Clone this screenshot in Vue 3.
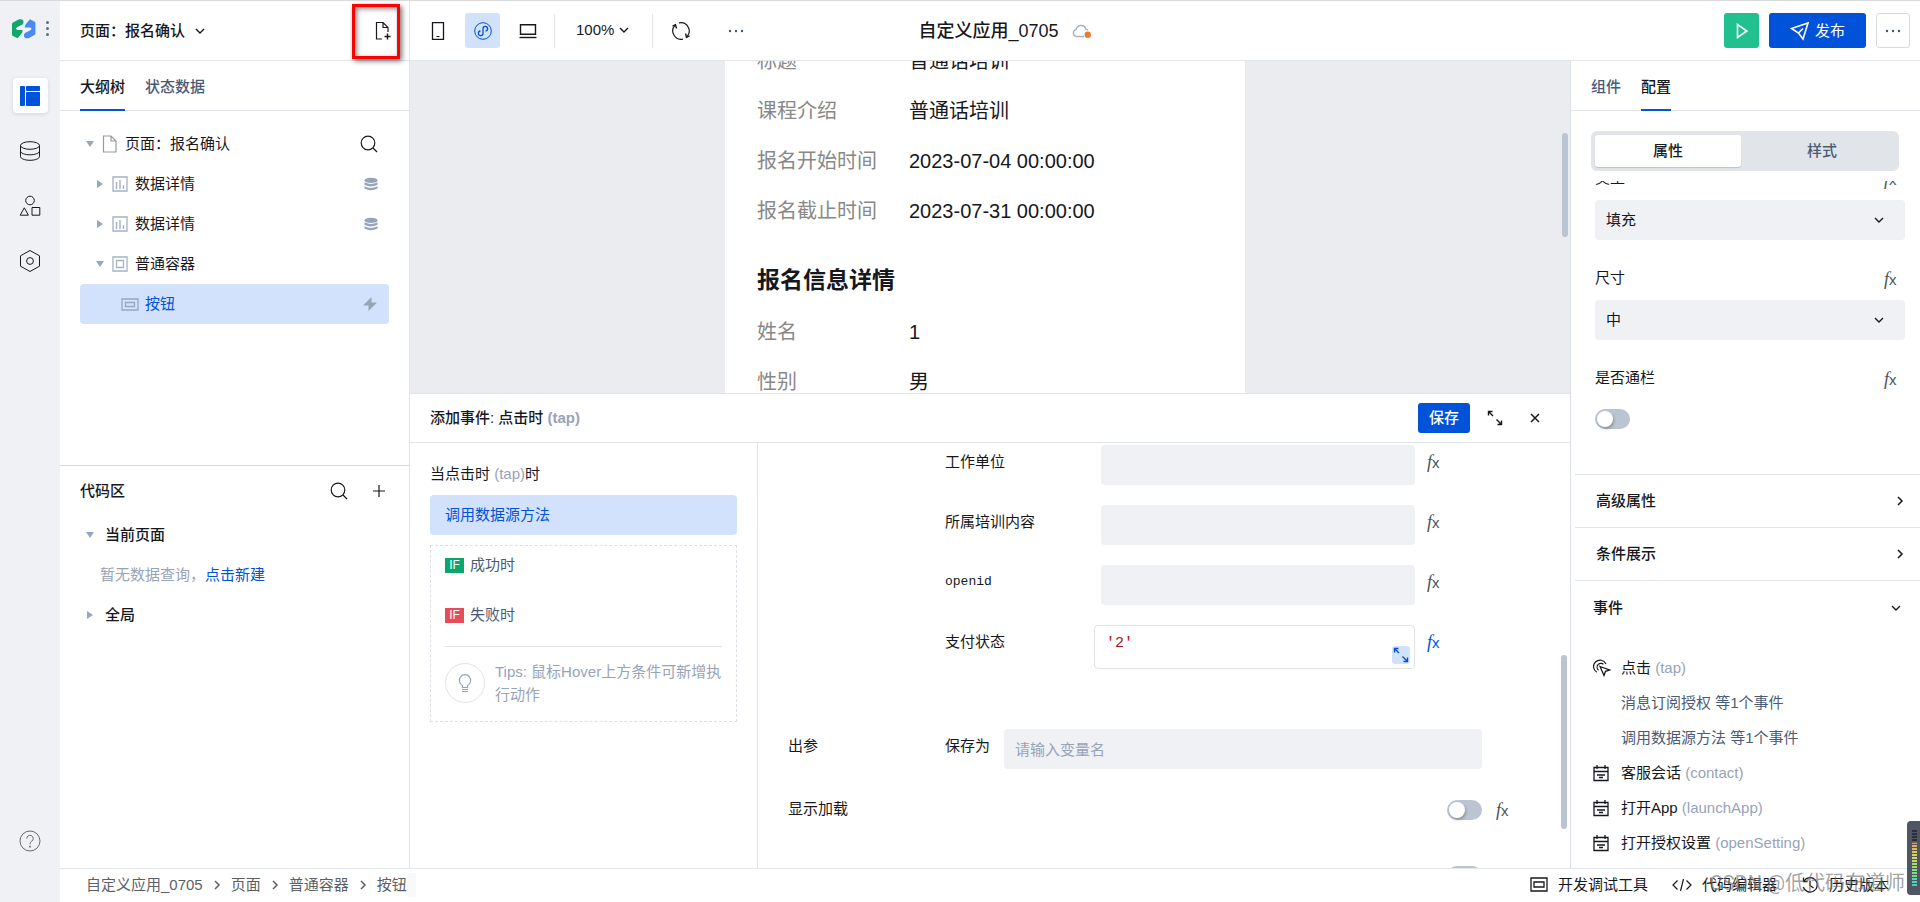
<script setup>
import { h, ref } from 'vue'

const icons = {
  chevronDown: [12, 12, '<path d="M2 4l4 4 4-4" stroke-width="1.4"/>'],
  chevronRight: [8, 12, '<path d="M2 2l4 4-4 4" stroke-width="1.5"/>'],
  filePlus: [18, 20, '<path d="M8 18H2.500V1.500H9L14 6.500V11M9 1.500V6.500H14" stroke-width="1.2"/><path d="M13.500 12.500v6M10.500 15.500h6" stroke-width="1.4"/>'],
  layout: [20, 20, '<path d="M.5.5H4.500V19.500H.5zM6.500.5H19.500V4.500H6.500zM6.500 6.500H19.500V19.500H6.500z" fill="#0052d9" stroke="#0052d9"/>'],
  database: [22, 22, '<ellipse cx="11" cy="5.500" rx="9.500" ry="3.800"/><path d="M1.500 5.500V16.500c0 2.100 4.200 3.800 9.500 3.800s9.500-1.700 9.500-3.800V5.500M1.500 11c0 2.100 4.200 3.800 9.500 3.800s9.500-1.700 9.500-3.800"/>'],
  shapes: [22, 22, '<circle cx="11" cy="5.500" r="4.300"/><path d="M5.300 12.800L9.400 20.200H1.200zM13 12.500H20.800V20.200H13z"/>'],
  hexagon: [22, 24, '<path d="M11 1.500L20.500 6.800V17.200L11 22.500 1.500 17.200V6.800z"/><circle cx="11" cy="12" r="3.400"/>'],
  help: [22, 22, '<circle cx="11" cy="11" r="10"/><path d="M7.800 8.600a3.200 3.200 0 1 1 5.200 2.400c-1.200 1-2 1.500-2 3.200"/><path d="M11 15.800v1.700" stroke-width="1.600"/>'],
  phone: [14, 20, '<path d="M1.500 1.700H12.500V18.300H1.500z" stroke-width="1.3"/><path d="M5.500 15.500h3"/>'],
  miniapp: [18, 18, '<circle cx="9" cy="9" r="8.300"/><path d="M9 6.700V11.300a2.300 2.300 0 1 1-2.600-2.300M9 6.700a2.300 2.300 0 1 1 2.600 2.300" stroke-width="1.300"/>'],
  laptop: [18, 16, '<path d="M1.500 1.700H16.500V11.300H1.500z" stroke-width="1.4"/><path d="M.5 14.500H17.500" stroke-width="1.400"/>'],
  sync: [20, 20, '<path d="M12 18.100A8.300 8.300 0 0 1 4.200 4.200M8 1.900A8.300 8.300 0 0 1 15.800 15.800" stroke-width="1.200"/><path d="M1.500 5.200L4.500 3.800 5.500 7.500M18.500 14.800L15.500 16.200 14.500 12.500" stroke-width="1.400"/>'],
  more: [16, 4, '<g fill="#3f5478" stroke="none"><circle cx="2" cy="2" r="1.200"/><circle cx="8" cy="2" r="1.200"/><circle cx="14" cy="2" r="1.200"/></g>'],
  cloud: [20, 16, '<path d="M12 13.500H4.500a3.500 3.500 0 0 1-.4-6.900 5 5 0 0 1 9.800-.2 4.300 4.300 0 0 1 2 .9" stroke="#a5b1c4" stroke-width="1.400"/><circle cx="15.800" cy="11.800" r="3.200" fill="#ed7b2f" stroke="none"/>'],
  play: [12, 16, '<path d="M1.500 1.500V14.500L10.800 8z" stroke="#fff" stroke-width="1.600"/>'],
  send: [20, 20, '<path d="M1.500 7.500L18 2 13 18 8.500 12zM8.500 12L13 7.500" stroke="#fff" stroke-width="1.600"/>'],
  search: [18, 18, '<circle cx="8" cy="8" r="6.800" stroke-width="1.200"/><path d="M13 13l4 4" stroke-width="1.300"/>'],
  plus: [14, 14, '<path d="M7 1V13M1 7H13" stroke-width="1.200"/>'],
  page: [16, 18, '<path d="M1.500 1H9L14 6V17H1.500zM9 1V6H14" stroke="#999" stroke-width="1.200"/>'],
  chart: [16, 16, '<path d="M1 1H15V15H1z" stroke="#a5b1c8" stroke-width="1.300"/><path d="M4.500 6V13M8 4V13M11.500 9V13" stroke="#a5b1c8" stroke-width="1.400"/>'],
  box: [16, 16, '<path d="M1 1H15V15H1zM4.500 4.500H11.500V11.500H4.500z" stroke="#a5b1c8" stroke-width="1.300"/>'],
  button: [18, 13, '<path d="M1 1H17V12H1zM4.500 4.500H13.500V8.500H4.500z" stroke="#98a6c0" stroke-width="1.300"/>'],
  stack: [14, 14, '<g fill="#97a3b7" stroke="none"><ellipse cx="7" cy="3.400" rx="6.500" ry="2.600"/><path d="M.5 5.200Q7 8.700 13.500 5.200V7.700Q7 11.300 .5 7.700zM.5 9.200Q7 12.700 13.500 9.200V11.500Q7 15 .5 11.500z"/></g>'],
  bolt: [16, 14, '<path d="M9.500 0L1 8.500H6.500V14L15 5.500H9.500z" fill="#97a3b7" stroke="none"/>'],
  open: [8, 6, '<path d="M0 0H8L4 6z" fill="#98a6bd" stroke="none"/>'],
  closed: [6, 8, '<path d="M0 0V8L6 4z" fill="#98a6bd" stroke="none"/>'],
  expand: [16, 16, '<path d="M1.500 5.500V1.500H5.500M1.500 1.500L6 6M14.500 10.500V14.500H10.500M14.500 14.500L9.500 9.500" stroke-width="1.400"/>'],
  close: [12, 12, '<path d="M2 2L10 10M10 2L2 10" stroke-width="1.500"/>'],
  bulb: [14, 20, '<path d="M4.500 14.500V12.500A5.700 5.700 0 1 1 9.500 12.500V14.500zM4 16.500H10M4 18.500H10" stroke="#98a3b5" stroke-width="1.200"/>'],
  tap: [18, 18, '<path d="M7 7.500L16.500 11 12.500 12.300 11 16.500z" stroke-width="1.300"/><path d="M5.500 11.200A3.800 3.800 0 1 1 10.500 5.200M3.800 13.200A6.500 6.500 0 1 1 13 5" stroke-width="1.200"/>'],
  event: [16, 18, '<path d="M1 3.500H15V16.500H1zM1 7.500H15M4 1V5M12 1V5M4 11H12M6 13.500H10" stroke-width="1.300"/>'],
  tool: [18, 15, '<path d="M1 1H17V14H1zM4 5H14V10H4z" stroke-width="1.300"/>'],
  code: [20, 14, '<path d="M5.500 2.500L1 7l4.500 4.500M14.500 2.500L19 7l-4.500 4.500M11.500 1L8.500 13" stroke-width="1.200"/>'],
  history: [18, 18, '<path d="M3 5a7.200 7.200 0 1 1-.8 6M2.500 1.500V5.500H6.500M9 5V9.500L12.500 12" stroke-width="1.300"/>'],
  logo: [24, 20, '<path d="M0 5Q0 4 1 3.500L6.500.5Q8 0 10 .5L11.300 1.500Q12 4 10.500 5.500L5 8.300Q2.500 10.500 6 11H10.500Q11 13 9.500 14.500L5.500 19.300 1 17Q0 16.500 0 15.500z" fill="#10a66c" stroke="none"/><path transform="rotate(180 11.700 9.800)" d="M0 5Q0 4 1 3.500L6.500.5Q8 0 10 .5L11.300 1.500Q12 4 10.500 5.500L5 8.300Q2.500 10.500 6 11H10.500Q11 13 9.500 14.500L5.500 19.300 1 17Q0 16.500 0 15.500z" fill="#4a8af4" stroke="none"/>'],
}

const Icon = ({ name }) => {
  const [w, hgt, body] = icons[name]
  return h('svg', {
    width: w, height: hgt, viewBox: `0 0 ${w} ${hgt}`, fill: 'none',
    stroke: 'currentColor', 'aria-hidden': 'true', innerHTML: body, class: 'icon',
  })
}
Icon.props = ['name']

const tools = [
  { icon: 'layout', label: '页面设计', on: true },
  { icon: 'database', label: '数据源' },
  { icon: 'shapes', label: '组件库' },
  { icon: 'hexagon', label: '应用设置' },
]
const tree = [
  { text: '页面：报名确认', icon: 'page', arrow: 'open', level: 0, end: 'search' },
  { text: '数据详情', icon: 'chart', arrow: 'closed', level: 1, end: 'stack' },
  { text: '数据详情', icon: 'chart', arrow: 'closed', level: 1, end: 'stack' },
  { text: '普通容器', icon: 'box', arrow: 'open', level: 1 },
  { text: '按钮', icon: 'button', level: 2, end: 'bolt', on: true },
]
const course = [
  ['标题', '普通话培训'],
  ['课程介绍', '普通话培训'],
  ['报名开始时间', '2023-07-04 00:00:00'],
  ['报名截止时间', '2023-07-31 00:00:00'],
]
const signup = [['姓名', '1'], ['性别', '男']]
const fields = ['工作单位', '所属培训内容', 'openid']
const selects = [
  { label: '类型', value: '填充' },
  { label: '尺寸', value: '中' },
]
const events = [
  { name: '客服会话', code: '(contact)' },
  { name: '打开App', code: '(launchApp)' },
  { name: '打开授权设置', code: '(openSetting)' },
]
const crumbs = ['自定义应用_0705', '页面', '普通容器', '按钮']
const expression = ref("'2'")
</script>

<template>
  <div class="app">
    <nav class="rail">
      <div class="brand"><Icon name="logo" /><span class="dots"><i></i><i></i><i></i></span></div>
      <button v-for="t in tools" :key="t.icon" class="tile" :class="{ on: t.on }" :aria-label="t.label"><Icon :name="t.icon" /></button>
      <button class="tile help" aria-label="帮助"><Icon name="help" /></button>
    </nav>

    <div class="main">
      <header class="top">
        <div class="top-left">
          <div class="page-pick">
            <button class="page-name">页面：报名确认<Icon name="chevronDown" /></button>
            <button class="new-page" aria-label="新建页面"><Icon name="filePlus" /></button>
            <span class="mark"></span>
          </div>
          <div class="toolbar">
            <button class="tile" aria-label="手机"><Icon name="phone" /></button>
            <button class="tile mini" aria-label="小程序"><Icon name="miniapp" /></button>
            <button class="tile" aria-label="电脑"><Icon name="laptop" /></button>
            <button class="zoom">100%<Icon name="chevronDown" /></button>
            <button class="tile sync" aria-label="刷新"><Icon name="sync" /></button>
            <button class="tile" aria-label="更多"><Icon name="more" /></button>
          </div>
        </div>
        <h1 class="title">自定义应用_0705<Icon name="cloud" /></h1>
        <div class="actions">
          <button class="run" aria-label="预览"><Icon name="play" /></button>
          <button class="publish"><Icon name="send" />发布</button>
          <button class="extra" aria-label="更多操作"><Icon name="more" /></button>
        </div>
      </header>

      <div class="body">
        <aside class="left">
          <section class="outline">
            <div class="tabs">
              <button class="tab on">大纲树</button>
              <button class="tab">状态数据</button>
            </div>
            <ul class="tree">
              <li v-for="(n, i) in tree" :key="i" class="node" :class="['lv' + n.level, { on: n.on }]">
                <span v-if="n.arrow" class="arrow"><Icon :name="n.arrow" /></span>
                <span class="kind"><Icon :name="n.icon" /></span>
                <span class="node-name">{{ n.text }}</span>
                <span v-if="n.end" class="end"><Icon :name="n.end" /></span>
              </li>
            </ul>
          </section>
          <section class="code">
            <div class="code-head">
              <h2>代码区</h2>
              <button class="plain" aria-label="搜索"><Icon name="search" /></button>
              <button class="plain" aria-label="新增"><Icon name="plus" /></button>
            </div>
            <div class="group"><span class="arrow"><Icon name="open" /></span>当前页面</div>
            <p class="empty">暂无数据查询，<a href="#">点击新建</a></p>
            <div class="group"><span class="arrow"><Icon name="closed" /></span>全局</div>
          </section>
        </aside>

        <main class="center">
          <section class="canvas">
            <div class="sheet">
              <dl>
                <div v-for="r in course" :key="r[0]" class="info"><dt>{{ r[0] }}</dt><dd>{{ r[1] }}</dd></div>
              </dl>
              <h3>报名信息详情</h3>
              <dl>
                <div v-for="r in signup" :key="r[0]" class="info"><dt>{{ r[0] }}</dt><dd>{{ r[1] }}</dd></div>
              </dl>
            </div>
            <span class="scrollbar canvas-bar"></span>
          </section>

          <section class="event-panel">
            <div class="event-head">
              <h2>添加事件: 点击时 <span class="muted">(tap)</span></h2>
              <button class="save">保存</button>
              <button class="plain" aria-label="展开"><Icon name="expand" /></button>
              <button class="plain" aria-label="关闭"><Icon name="close" /></button>
            </div>
            <div class="event-body">
              <div class="flow">
                <p class="when">当点击时 <span class="muted">(tap)</span>时</p>
                <button class="action">调用数据源方法</button>
                <div class="branches">
                  <div class="branch"><span class="if ok">IF</span>成功时</div>
                  <div class="branch"><span class="if bad">IF</span>失败时</div>
                  <div class="tips"><span class="bulb"><Icon name="bulb" /></span><p>Tips: 鼠标Hover上方条件可新增执行动作</p></div>
                </div>
              </div>
              <form class="form" @submit.prevent>
                <div v-for="f in fields" :key="f" class="field">
                  <label :for="f" :class="{ mono: f === 'openid' }">{{ f }}</label>
                  <input :id="f" type="text" class="box">
                  <button type="button" class="fx"><i>f</i><b>x</b></button>
                </div>
                <div class="field status">
                  <label for="pay">支付状态</label>
                  <div class="editor">
                    <input id="pay" v-model="expression" type="text">
                    <button type="button" class="enlarge" aria-label="放大编辑"><Icon name="expand" /></button>
                  </div>
                  <button type="button" class="fx active"><i>f</i><b>x</b></button>
                </div>
                <div class="output">
                  <span class="caption">出参</span>
                  <label for="save-as">保存为</label>
                  <input id="save-as" type="text" class="box" placeholder="请输入变量名">
                </div>
                <div class="switch-row">
                  <label for="loading">显示加载</label>
                  <input id="loading" type="checkbox" class="switch">
                  <button type="button" class="fx"><i>f</i><b>x</b></button>
                </div>
                <div class="switch-row">
                  <span></span>
                  <input type="checkbox" class="switch" aria-label="选项">
                  <span class="fx"></span>
                </div>
              </form>
              <span class="scrollbar form-bar"></span>
            </div>
          </section>
        </main>

        <aside class="right">
          <div class="tabs">
            <button class="tab">组件</button>
            <button class="tab on">配置</button>
          </div>
          <div class="segment">
            <button class="on">属性</button>
            <button>样式</button>
          </div>
          <div class="props">
            <div class="prop-list">
              <div v-for="s in selects" :key="s.label" class="prop">
                <div class="prop-head"><label :for="s.label">{{ s.label }}</label><button class="fx"><i>f</i><b>x</b></button></div>
                <div class="select"><select :id="s.label"><option>{{ s.value }}</option></select><Icon name="chevronDown" /></div>
              </div>
              <div class="prop">
                <div class="prop-head"><label for="full">是否通栏</label><button class="fx"><i>f</i><b>x</b></button></div>
                <input id="full" type="checkbox" class="switch">
              </div>
            </div>
            <button class="fold">高级属性<Icon name="chevronRight" /></button>
            <button class="fold">条件展示<Icon name="chevronRight" /></button>
            <button class="fold events-fold">事件<Icon name="chevronDown" /></button>
            <ul class="events">
              <li><span class="event-icon"><Icon name="tap" /></span>点击 <span class="muted">(tap)</span></li>
              <li class="sub">消息订阅授权 等1个事件</li>
              <li class="sub">调用数据源方法 等1个事件</li>
              <li v-for="e in events" :key="e.code"><span class="event-icon"><Icon name="event" /></span>{{ e.name }} <span class="muted">{{ e.code }}</span></li>
            </ul>
          </div>
        </aside>
      </div>

      <footer class="foot">
        <nav class="crumbs">
          <template v-for="(c, i) in crumbs" :key="c">
            <Icon v-if="i" name="chevronRight" /><a href="#">{{ c }}</a>
          </template>
          <span class="crumb-end"></span>
        </nav>
        <div class="links">
          <button><Icon name="tool" />开发调试工具</button>
          <button><Icon name="code" />代码编辑器</button>
          <button><Icon name="history" />历史版本</button>
        </div>
      </footer>
    </div>
    <span class="watermark">CSDN @低代码布道师</span>
    <span class="meter"><i></i></span>
  </div>
</template>

<style>
html, body { margin: 0; }
</style>

<style scoped>
* { box-sizing: border-box; }
.app {
  position: relative; display: flex; height: 100vh; min-height: 720px; overflow: hidden;
  border-top: 1px solid #d8d9db; background: #fff; color: #16181d;
  font: 15px/20px "Liberation Sans", "Noto Sans CJK SC", sans-serif;
}
button, input, select { font: inherit; color: inherit; border: 0; margin: 0; padding: 0; background: none; outline: none; }
button { cursor: pointer; display: flex; align-items: center; justify-content: center; }
h1, h2, h3, p, dl, dd, ul { margin: 0; padding: 0; }
h2 { font-size: 15px; font-weight: 500; }
ul { list-style: none; }
a { text-decoration: none; color: #0052d9; }
.icon { flex: none; display: block; }
.muted { color: #97a3b7; }

.rail { flex: none; width: 60px; display: flex; flex-direction: column; align-items: center; gap: 20px; padding-bottom: 44px; background: #f0f1f5; }
.brand { display: flex; align-items: center; gap: 10px; height: 57px; padding-bottom: 2px; }
.dots { display: flex; flex-direction: column; gap: 3px; }
.dots i { width: 3px; height: 3px; border-radius: 50%; background: #5f6b80; }
.tile { flex: none; width: 35px; height: 35px; border-radius: 3px; }
.tile.on { background: #fff; border-radius: 4px; box-shadow: 0 1px 4px rgba(0, 0, 0, .12); }
.help { margin-top: auto; color: #666a72; }

.main { flex: 1; min-width: 0; display: flex; flex-direction: column; }
.top { flex: none; height: 60px; display: grid; grid-template-columns: 1fr auto 1fr; border-bottom: 1px solid #e1e4e9; }
.top-left { display: flex; min-width: 0; }
.page-pick { position: relative; flex: none; width: 350px; display: flex; align-items: center; justify-content: space-between; padding: 0 17px 0 20px; border-right: 1px solid #e1e4e9; }
.page-name { gap: 9px; font-weight: 500; }
.mark { position: absolute; top: 3px; right: 9px; width: 48px; height: 55px; border: 3px solid #f00; box-shadow: 2px 2px 5px rgba(0, 0, 0, .55), inset 2px 2px 5px rgba(0, 0, 0, .45); pointer-events: none; }
.toolbar { display: flex; align-items: center; gap: 10px; padding-left: 10px; }
.mini { background: #d3e2fc; color: #0052d9; }
.zoom { gap: 4px; height: 34px; margin-left: -1px; padding: 0 22px 2px 21px; border: solid #e1e4e9; border-width: 0 1px; }
.sync { margin-right: 10px; }
.title { display: flex; align-items: center; gap: 13px; padding-left: 30px; font-size: 18px; font-weight: 500; }
.actions { display: flex; align-items: center; justify-content: flex-end; gap: 10px; padding-right: 10px; }
.run { width: 35px; height: 35px; border-radius: 3px; background: #20c18f; }
.publish { width: 97px; height: 35px; gap: 5px; border-radius: 3px; background: #0052d9; color: #fff; }
.extra { width: 34px; height: 35px; border: 1px solid #d5dae4; border-radius: 3px; }

.body { flex: 1; min-height: 0; display: flex; }
.left { flex: none; width: 350px; display: flex; flex-direction: column; border-right: 1px solid #e1e4e9; }
.outline { flex: 1; min-height: 0; overflow: hidden; }
.tabs { flex: none; display: flex; gap: 20px; height: 50px; padding: 0 20px; border-bottom: 1px solid #e1e4e9; }
.tab { height: 50px; padding-top: 3px; border-bottom: 2px solid transparent; color: #4b5b76; font-weight: 500; }
.tab.on { border-color: #0052d9; color: #16181d; }
.tree { padding: 13px 20px 0; }
.node { display: flex; align-items: center; height: 40px; padding-right: 11px; border-radius: 4px; }
.arrow { flex: none; width: 8px; margin-right: 8px; display: flex; justify-content: center; }
.lv0 { padding-left: 6px; }
.lv1 { padding-left: 16px; }
.lv2 { padding-left: 41px; }
.kind { margin-right: 7px; }
.lv2 .kind { margin-right: 6px; }
.end { margin-left: auto; }
.node.on { background: #d3e2fc; color: #0052d9; }
.code { flex: none; height: 403px; padding: 0 20px; border-top: 1px solid #d5d9e2; }
.code-head { display: flex; align-items: center; gap: 24px; height: 49px; padding-right: 3px; }
.code-head h2 { margin-right: auto; }
.group, .empty { display: flex; align-items: center; height: 40px; }
.group { padding-left: 6px; font-weight: 500; }
.group .arrow { margin-right: 11px; }
.empty { padding-left: 20px; color: #97a3b7; }

.center { flex: 1; min-width: 0; display: flex; flex-direction: column; }
.canvas { position: relative; flex: 1; min-height: 0; overflow: hidden; padding-right: 10px; background: #eaecf0; }
.sheet { width: 520px; margin: -25px auto 0; padding: 0 32px; background: #fff; font-size: 20px; }
.info { display: flex; align-items: center; height: 50px; }
.info dt { flex: none; width: 152px; color: #888; }
.sheet h3 { display: flex; align-items: center; height: 71px; padding-top: 16px; font-size: 23px; line-height: 30px; }
.scrollbar { position: absolute; width: 6px; border-radius: 3px; background: #bbc4d2; }
.canvas-bar { top: 72px; right: 2px; height: 104px; }

.event-panel { flex: none; height: 475px; display: flex; flex-direction: column; border-top: 1px solid #e1e4e9; }
.event-head { flex: none; display: flex; align-items: center; gap: 26px; height: 49px; padding: 0 29px 0 20px; border-bottom: 1px solid #e1e4e9; }
.event-head h2 { margin-right: auto; }
.event-head h2 .muted { font-weight: bold; }
.save { width: 52px; height: 30px; margin-right: -9px; border-radius: 3px; background: #0052d9; color: #fff; font-weight: 500; }
.event-body { position: relative; flex: 1; min-height: 0; display: flex; overflow: hidden; }
.flow { flex: none; width: 348px; padding: 21px 20px 0; border-right: 1px solid #e1e4e9; }
.when { margin-bottom: 11px; }
.action { width: 100%; height: 40px; justify-content: flex-start; padding-left: 15px; border-radius: 4px; background: #d3e2fc; color: #0052d9; }
.branches { margin-top: 10px; padding: 0 14px; border: 1px dashed #dcdfe6; }
.branch { display: flex; align-items: center; gap: 6px; height: 50px; padding-bottom: 12px; color: #4b5b76; }
.if { width: 19px; height: 15px; font-size: 12px; line-height: 15px; text-align: center; color: #fff; }
.ok { background: #0aa66c; }
.bad { background: #e54d59; }
.tips { display: flex; align-items: center; gap: 10px; height: 75px; padding-bottom: 2px; border-top: 1px solid #e1e4e9; color: #97a3b7; line-height: 23px; }
.bulb { flex: none; width: 40px; height: 40px; display: flex; align-items: center; justify-content: center; border: 1px solid #e1e4e9; border-radius: 50%; }

.form { flex: 1; min-width: 0; margin-top: -8px; padding-left: 30px; }
.field { display: grid; grid-template-columns: 156px minmax(0, 1fr) 28px; align-items: center; height: 60px; margin: 0 127px 0 157px; }
.field label { padding-bottom: 6px; }
.field > .fx { justify-self: end; margin-bottom: 6px; }
.mono { font: 13px/20px "Liberation Mono", monospace; }
.box { width: 100%; height: 40px; padding: 0 11px; border-radius: 4px; background: #f0f1f5; }
.box::placeholder { color: #97a3b7; opacity: 1; }
.status { height: 64px; margin-bottom: 42px; }
.status label { padding-bottom: 10px; }
.status > .fx { margin-bottom: 10px; }
.editor { display: flex; align-items: flex-end; height: 44px; margin-left: -7px; padding: 0 4px 4px 11px; border: 1px solid #dfe2e8; border-radius: 4px; }
.editor input { flex: 1; min-width: 0; height: 38px; padding-bottom: 3px; font-family: "Liberation Mono", monospace; color: #a11; }
.enlarge { width: 18px; height: 18px; border-radius: 3px; background: #d3e2fc; color: #0052d9; }
.output { display: grid; grid-template-columns: 157px 59px minmax(0, 1fr); align-items: center; height: 56px; padding-right: 88px; }
.output label, .caption { padding-bottom: 6px; }
.switch-row { display: grid; grid-template-columns: 1fr auto 16px; column-gap: 14px; align-items: center; height: 66px; padding-right: 58px; }
.switch-row label { padding-bottom: 3px; }
.form-bar { top: 212px; right: 3px; height: 174px; }

.fx { width: 16px; height: 20px; color: #4d525c; justify-content: flex-start; align-items: baseline; line-height: 20px; }
.fx i { font: italic 18px/20px "Liberation Serif", serif; }
.fx b { font: 15px/20px "Liberation Sans", sans-serif; }
.fx.active { color: #0052d9; }
.switch { appearance: none; display: block; width: 35px; height: 20px; padding: 2px; border-radius: 10px; background: #bbc4d2; cursor: pointer; }
.switch::before { content: ""; display: block; width: 16px; height: 16px; border-radius: 50%; background: #fff; box-shadow: 1px 2px 3px rgba(0, 0, 0, .25); }

.right { flex: none; width: 350px; display: flex; flex-direction: column; border-left: 1px solid #dce0e6; }
.segment { flex: none; display: flex; height: 40px; margin: 20px 21px 10px 20px; padding: 4px; border-radius: 6px; background: #e1e5ea; }
.segment button { flex: 1; color: #4b5b76; font-weight: 500; }
.segment button + button { padding-left: 8px; }
.segment .on { border-radius: 3px; background: #fff; color: #16181d; box-shadow: 0 1px 1px #b9c1ce; }
.props { flex: 1; min-height: 0; overflow: hidden; padding-left: 4px; }
.prop-list { height: 314px; margin-top: -21px; padding: 0 15px 0 20px; }
.prop { height: 100px; }
.prop-head { display: flex; align-items: center; justify-content: space-between; height: 40px; padding-right: 5px; }
.prop-head label { padding-bottom: 5px; }
.prop-head .fx { margin-bottom: 3px; }
.select { position: relative; }
.select select { appearance: none; width: 100%; height: 40px; padding-left: 11px; border-radius: 4px; background: #f0f1f5; }
.select .icon { position: absolute; right: 20px; top: 14px; pointer-events: none; }
.prop .switch { margin-top: 9px; }
.fold { width: 100%; height: 53px; justify-content: space-between; padding: 0 16px 0 21px; border-top: 1px solid #e1e4e9; font-weight: 500; }
.events-fold { height: 54px; padding: 0 18px 0 18px; }
.events { padding: 16px 0 0 18px; }
.events li { display: flex; align-items: center; height: 35px; white-space: pre; }
.event-icon { width: 28px; }
.events .sub { padding-left: 28px; color: #4b5b76; }

.foot { flex: none; height: 34px; display: flex; justify-content: space-between; border-top: 1px solid #e1e4e9; padding: 0 31px 2px 26px; }
.crumbs { display: flex; align-items: center; gap: 10px; }
.crumbs, .crumbs a { color: #5c5f66; }
.crumb-end { width: 9px; height: 24px; margin-left: -10px; background: #f8f9fb; }
.links { display: flex; gap: 24px; }
.links button { gap: 10px; }
.watermark { position: absolute; right: 15px; bottom: 6px; font: 20px/26px Roboto, "Noto Sans CJK SC", sans-serif; color: rgba(110, 110, 110, .65); white-space: nowrap; pointer-events: none; }
.meter { position: absolute; right: 0; bottom: 7px; width: 13px; height: 74px; padding: 9px 3px 8px 5px; border-radius: 4px 0 0 4px; background: #505564; pointer-events: none; }
.meter i { display: block; height: 57px; background: repeating-linear-gradient(transparent 0 2px, #505564 2px 3px), linear-gradient(#2d303a 0 20%, #e8a35b 24%, #dbd95a 48%, #84d98b 72%, #4cc9bb); }
</style>
